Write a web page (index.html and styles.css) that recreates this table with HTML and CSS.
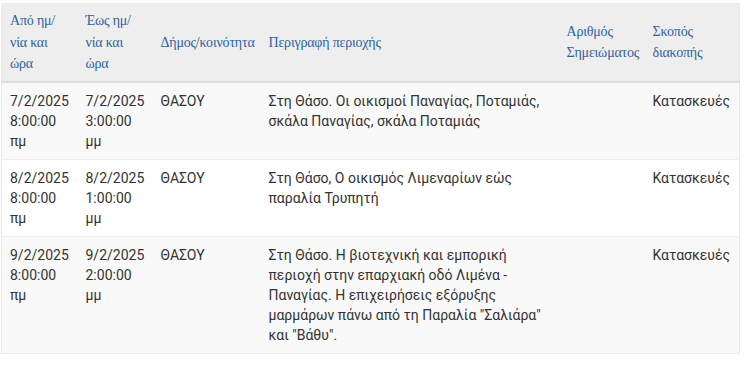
FILE: index.html
```html
<!DOCTYPE html>
<html lang="el">
<head>
<meta charset="utf-8">
<title>Διακοπές ρεύματος</title>
<link rel="stylesheet" href="styles.css">
</head>
<body>
<div class="wrap">
<table class="outages">
  <colgroup>
    <col class="c1"><col class="c2"><col class="c3"><col class="c4"><col class="c5"><col class="c6">
  </colgroup>
  <thead>
    <tr>
      <th>Από ημ/ νία και ώρα</th>
      <th>Έως ημ/ νία και ώρα</th>
      <th class="nowrap">Δήμος/κοινότητα</th>
      <th>Περιγραφή περιοχής</th>
      <th>Αριθμός Σημειώματος</th>
      <th>Σκοπός διακοπής</th>
    </tr>
  </thead>
  <tbody>
    <tr class="odd">
      <td>7/2/2025 8:00:00 πμ</td>
      <td>7/2/2025 3:00:00 μμ</td>
      <td>ΘΑΣΟΥ</td>
      <td>Στη Θάσο. Οι οικισμοί Παναγίας, Ποταμιάς, σκάλα Παναγίας, σκάλα Ποταμιάς</td>
      <td></td>
      <td>Κατασκευές</td>
    </tr>
    <tr>
      <td>8/2/2025 8:00:00 πμ</td>
      <td>8/2/2025 1:00:00 μμ</td>
      <td>ΘΑΣΟΥ</td>
      <td>Στη Θάσο, Ο οικισμός Λιμεναρίων εώς παραλία Τρυπητή</td>
      <td></td>
      <td>Κατασκευές</td>
    </tr>
    <tr class="odd">
      <td>9/2/2025 8:00:00 πμ</td>
      <td>9/2/2025 2:00:00 μμ</td>
      <td>ΘΑΣΟΥ</td>
      <td>Στη Θάσο. Η βιοτεχνική και εμπορική περιοχή στην επαρχιακή οδό Λιμένα - Παναγίας. Η επιχειρήσεις εξόρυξης μαρμάρων πάνω από τη Παραλία "Σαλιάρα" και "Βάθυ".</td>
      <td></td>
      <td>Κατασκευές</td>
    </tr>
  </tbody>
</table>
</div>
</body>
</html>
```

FILE: styles.css
```css
html, body {
  margin: 0;
  padding: 0;
  background: #fff;
}

.wrap {
  padding: 3px 0 0 1px;
}

.outages {
  width: 738px;
  border-collapse: collapse;
  table-layout: fixed;
  border: 1px solid #eaeaea;
}

.c1 { width: 76px; }
.c2 { width: 75px; }
.c3 { width: 108px; }
.c4 { width: 298px; }
.c5 { width: 86px; }
.c6 { width: 95px; }

.outages th {
  background: #eeeeee;
  font-family: "Liberation Serif", "Times New Roman", serif;
  font-weight: normal;
  font-size: 14px;
  letter-spacing: -0.2px;
  line-height: 21.5px;
  color: #2d63a0;
  text-align: left;
  vertical-align: middle;
  padding: 6px 8px;
  border-bottom: 2px solid #dddddd;
}

.outages th.nowrap {
  white-space: nowrap;
}

.outages td {
  font-family: Roboto, "Noto Sans", sans-serif;
  font-size: 14px;
  line-height: 20px;
  color: #333333;
  vertical-align: top;
  padding: 8px;
  border-top: 1px solid #eeeeee;
  background: #ffffff;
}

.outages tr.odd td {
  background: #f9f9f9;
}
```
